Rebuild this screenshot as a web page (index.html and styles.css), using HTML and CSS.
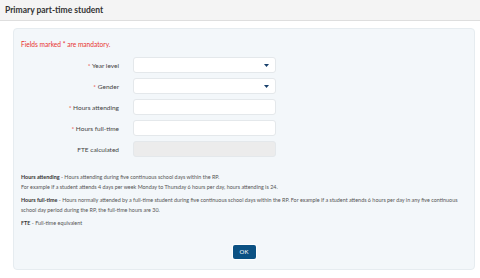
FILE: index.html
```html
<!DOCTYPE html>
<html lang="en">
<head>
    <meta charset="UTF-8">
    <meta name="viewport" content="width=device-width, initial-scale=1.0">
    <title>Primary part-time student</title>
    <link rel="stylesheet" href="styles.css">
</head>
<body>
    <div class="header">
        <h1>Primary part-time student</h1>
    </div>
    <div class="main">
        <div class="panel">
            <p class="mandatory">Fields marked * are mandatory.</p>
            <form class="form" id="studentForm">
                <label for="yearLevel"><span class="req">*</span> Year level</label>
                <div class="select">
                    <select id="yearLevel"></select>
                    <svg class="arrow" width="5" height="3" viewBox="0 0 5 3"><path d="M0 0H5L2.5 3Z" fill="#173f6b"/></svg>
                </div>

                <label for="gender"><span class="req">*</span> Gender</label>
                <div class="select">
                    <select id="gender"></select>
                    <svg class="arrow" width="5" height="3" viewBox="0 0 5 3"><path d="M0 0H5L2.5 3Z" fill="#173f6b"/></svg>
                </div>

                <label for="hoursAttending"><span class="req">*</span> Hours attending</label>
                <input type="text" id="hoursAttending">

                <label for="hoursFullTime"><span class="req">*</span> Hours full-time</label>
                <input type="text" id="hoursFullTime">

                <label for="fte">FTE calculated</label>
                <input type="text" id="fte" disabled>
            </form>

            <div class="help">
                <p><b>Hours attending</b> - Hours attending during five continuous school days within the RP.<br>
                For example if a student attends 4 days per week Monday to Thursday 6 hours per day, hours attending is 24.</p>
                <p><b>Hours full-time</b> - Hours normally attended by a full-time student during five continuous school days within the RP. For example if a student attends 6 hours per day in any five continuous school day period during the RP, the full-time hours are 30.</p>
                <p><b>FTE</b> - Full-time equivalent</p>
            </div>

            <div class="actions">
                <button type="button">OK</button>
            </div>
        </div>
    </div>
</body>
</html>
```

FILE: styles.css
```css
body {
    margin: 0;
    font-family: Lato, "Liberation Sans", sans-serif;
    color: #333;
    background-color: white;
}

.header {
    height: 20px;
    background-color: #f4f4f4;
    border-bottom: 1px solid #dedede;
    display: flex;
    align-items: center;
    padding-left: 5px;
}

.header h1 {
    margin: 0;
    font-size: 8.5px;
    font-weight: bold;
    color: #333;
}

.main {
    padding: 7px 5px 0 13px;
}

.panel {
    height: 242px;
    background-color: #f3f7fa;
    border: 1px solid #e6ecf0;
    border-radius: 4px;
    padding: 0 7px;
    box-sizing: border-box;
}

.mandatory {
    margin: 10px 0 0;
    font-size: 6.6px;
    line-height: 10px;
    color: #e8322f;
}

.form {
    display: grid;
    grid-template-columns: 98px 143px;
    grid-auto-rows: 16px;
    column-gap: 14px;
    row-gap: 5px;
    margin-top: 8px;
}

.form label {
    font-size: 6.5px;
    text-align: right;
    align-self: center;
    color: #444;
}

.req {
    color: #e8322f;
}

.form input,
.form select {
    display: block;
    width: 100%;
    height: 16px;
    border: 1px solid #e4e8eb;
    border-radius: 3px;
    background-color: white;
    box-sizing: border-box;
    margin: 0;
    padding: 0 4px;
    appearance: none;
    font-size: 7px;
    font-family: inherit;
}

.form input:disabled {
    background-color: #ececec;
}

.select {
    position: relative;
    height: 16px;
}

.arrow {
    position: absolute;
    right: 7px;
    top: 7px;
}

.help {
    margin-top: 16px;
    font-size: 5.4px;
    line-height: 9.6px;
    color: #555;
}

.help p {
    margin: 0 0 4px;
}

.help b {
    color: #333;
}

.actions {
    display: flex;
    justify-content: center;
    margin-top: 16px;
}

button {
    width: 23px;
    height: 14px;
    padding: 0;
    border: none;
    border-radius: 2px;
    background-color: #0b5183;
    color: white;
    font-family: inherit;
    font-size: 6px;
    box-shadow: 0 0 0 1px white;
    cursor: pointer;
}
```
